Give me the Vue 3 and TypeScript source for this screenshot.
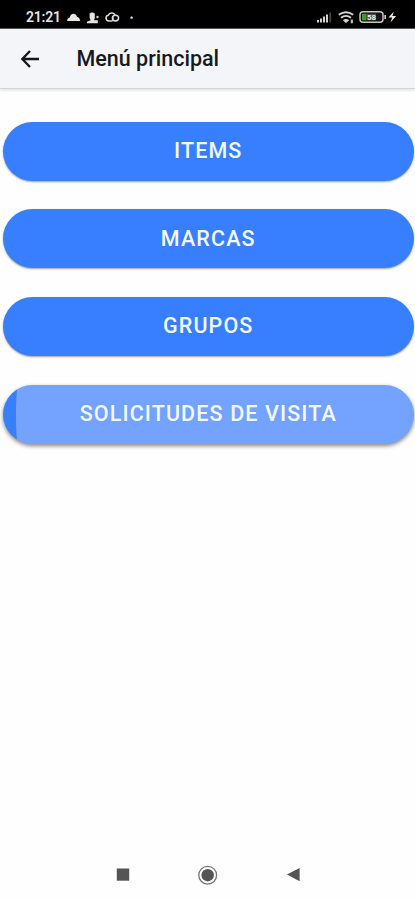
<script setup lang="ts">
interface MenuEntry {
  label: string
  pressed?: boolean
}

const entries: MenuEntry[] = [
  { label: 'ITEMS' },
  { label: 'MARCAS' },
  { label: 'GRUPOS' },
  { label: 'SOLICITUDES DE VISITA', pressed: true },
]
</script>

<template>
  <div class="screen">
    <div class="status">
      <span class="clock">21:21</span>
      <svg class="notices" width="72" height="16" viewBox="0 0 72 16">
        <path d="M1.200 12v-1.200Q1.500 9 3.600 8.700Q4.500 4.800 7.400 4.700Q10.200 4.700 11 7.800Q13.800 8.600 14.200 12z" fill="#e8e8e8" />
        <path d="M23.600 4.600Q26.300 2.600 28.800 4.600V9L28.100 11.300H31.800V14.300H20.900V12.700L24.700 11.300L23.600 9z" fill="#e4e4e4" />
        <circle cx="31.500" cy="8" r="1.200" fill="#d0d0d0" />
        <g fill="none" stroke="#ddd" stroke-width="1.500">
          <path d="M46.500 12h-3.700a2.900 2.900 0 0 1-.6-5.700 3.900 3.900 0 0 1 6.800-.4" />
          <ellipse cx="49.500" cy="9.100" rx="3.100" ry="2.900" />
          <path d="M46.800 11.800V8" />
        </g>
        <rect x="64.500" y="7.600" width="2.200" height="2.200" rx=".6" fill="#ddd" />
      </svg>
      <svg class="signals" width="84" height="18" viewBox="0 0 84 18">
        <g fill="#d0d0d0">
          <rect x="1" y="12" width="2" height="2.500" />
          <rect x="4" y="10.500" width="2" height="4" />
          <rect x="7" y="8.500" width="2" height="6" />
          <rect x="10" y="6.500" width="2" height="8" />
          <rect x="13.300" y="4.500" width="1.800" height="10" fill="#444" />
        </g>
        <g fill="none" stroke="#d4d4d4" stroke-width="1.900">
          <path d="M22.800 6.800q7.200-5.200 14.400 0M25 9.800q5-3.800 10 0" />
        </g>
        <path d="M26.800 12.200q3.200-2.400 6.400 0L30 15z" fill="#d4d4d4" />
        <rect x="34.700" y="11.500" width="2.200" height="3.800" fill="#bbb" />
        <rect x="44" y="3.700" width="23" height="10.600" rx="3" fill="#111" stroke="#c5c5c5" stroke-width="1.500" />
        <rect x="46" y="5.700" width="4.500" height="6.600" fill="#3f9d20" />
        <rect x="50.500" y="5.700" width="9.500" height="6.600" fill="#4c4c4c" />
        <text x="51" y="12" font-size="8" font-weight="700" fill="#eee">58</text>
        <rect x="68.300" y="7" width="1.700" height="4" fill="#c5c5c5" />
        <path d="M77.800 3.500l-5.300 6h3.700l-1.700 5 5.600-6.600h-3.700z" fill="#eee" />
      </svg>
    </div>

    <header class="bar">
      <svg class="back" width="20" height="20" viewBox="0 0 20 20">
        <path d="M10 2L2.300 10l7.700 8M2.500 10H19" fill="none" stroke="#141618" stroke-width="2.300" />
      </svg>
      <h1>Menú principal</h1>
    </header>

    <main class="menu">
      <button v-for="entry in entries" :key="entry.label" type="button" class="entry" :class="{ pressed: entry.pressed }">
        <span>{{ entry.label }}</span>
      </button>
    </main>

    <nav class="system">
      <svg width="14" height="14" viewBox="0 0 14 14"><rect x=".8" y=".5" width="12.400" height="12.200" fill="#555" /></svg>
      <svg width="20" height="20" viewBox="0 0 20 20">
        <circle cx="9.700" cy="10.200" r="8.900" fill="none" stroke="#777" stroke-width="1.300" />
        <circle cx="9.700" cy="10.200" r="6.200" fill="#555" />
      </svg>
      <svg width="14" height="14" viewBox="0 0 14 14"><path d="M1 6.500L13.600 0v13.200z" fill="#555" /></svg>
    </nav>
  </div>
</template>

<style>
body {
  background: #fefefe;
}
</style>

<style scoped>
.screen {
  width: 415px;
  height: 900px;
  display: flex;
  flex-direction: column;
  background: #fefefe;
  font-family: Roboto, 'Liberation Sans', sans-serif;
  overflow: hidden;
}

.status {
  flex: none;
  box-sizing: border-box;
  height: 29px;
  padding: 5px 15px 0 26px;
  display: flex;
  align-items: center;
  background: #000;
  border-bottom: 1px solid #55565a;
}

.clock {
  width: 40px;
  color: #e6e6e6;
  font-size: 14px;
  font-weight: 600;
  line-height: 16px;
  letter-spacing: -0.200px;
}

.signals {
  margin-left: auto;
}

.bar {
  flex: none;
  box-sizing: border-box;
  height: 60px;
  padding-left: 20px;
  display: flex;
  align-items: center;
  background: #f4f5f9;
  border-bottom: 1px solid #d3d4d7;
  box-shadow: 0 1px 3px rgba(0, 0, 0, 0.14);
}

h1 {
  margin: 0 0 0 36.500px;
  color: #17191c;
  font-size: 21.500px;
  font-weight: 500;
  line-height: 30px;
}

.menu {
  flex: 1;
  padding: 32.500px 1.500px 0 3px;
  display: flex;
  flex-direction: column;
  gap: 28.700px;
}

.entry {
  height: 59px;
  flex: none;
  padding: 0;
  border: 0;
  border-radius: 30px;
  background: #387fff;
  box-shadow: 0 1px 2px rgba(0, 0, 0, 0.38);
  color: #f3f8ff;
  font: 500 21.500px/58px Roboto, 'Liberation Sans', sans-serif;
  letter-spacing: 1.120px;
  text-align: center;
}

.pressed {
  background: radial-gradient(circle at 350px 30px, #73a3ff 336.500px, #387fff 337.500px) left / 350px 100% no-repeat, #73a3ff;
  box-shadow: 0 2px 4px rgba(0, 0, 0, 0.48);
}

.system {
  flex: none;
  height: 50px;
  display: flex;
  align-items: center;
  justify-content: center;
  gap: 68px;
}
</style>
